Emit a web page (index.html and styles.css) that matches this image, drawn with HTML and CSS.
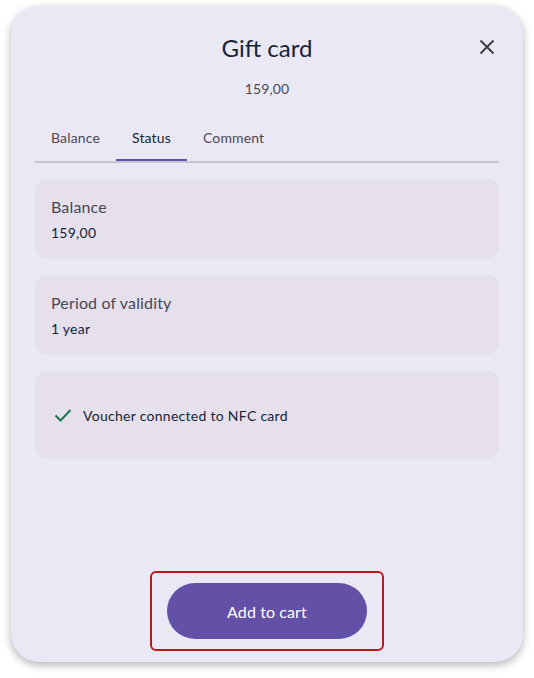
FILE: index.html
```html
<!DOCTYPE html>
<html lang="en">
<head>
    <meta charset="UTF-8">
    <meta name="viewport" content="width=device-width, initial-scale=1.0">
    <title>Gift card</title>
    <link rel="stylesheet" href="styles.css">
</head>
<body>
    <div class="dialog">
        <header class="dialog-header">
            <h1>Gift card</h1>
            <button class="close-btn" aria-label="Close">
                <svg width="24" height="24" viewBox="0 0 24 24"><path d="M5.5 5.5 L18.5 18.5 M18.5 5.5 L5.5 18.5" stroke="#3f3e48" stroke-width="2" fill="none"/></svg>
            </button>
        </header>
        <p class="price">159,00</p>

        <nav class="tabs">
            <a href="#" class="tab">Balance</a>
            <a href="#" class="tab active">Status</a>
            <a href="#" class="tab">Comment</a>
        </nav>

        <div class="info-list">
            <div class="info-card">
                <div class="info-label">Balance</div>
                <div class="info-value">159,00</div>
            </div>
            <div class="info-card">
                <div class="info-label">Period of validity</div>
                <div class="info-value">1 year</div>
            </div>
            <div class="info-card status-card">
                <svg width="24" height="24" viewBox="0 0 24 24"><path d="M4.5 12.5 L9.5 17.5 L19.5 7" stroke="#1b7a4c" stroke-width="2" fill="none"/></svg>
                <span>Voucher connected to NFC card</span>
            </div>
        </div>

        <footer class="dialog-footer">
            <div class="highlight">
                <button class="cart-btn">Add to cart</button>
            </div>
        </footer>
    </div>
</body>
</html>
```

FILE: styles.css
```css
/* Gift card dialog */
body {
    font-family: Lato, "Open Sans", sans-serif;
    background-color: #fff;
    margin: 0;
    padding: 6px 11px 16px;
}
.dialog {
    height: 656px;
    box-sizing: border-box;
    background-color: #ebe8f5;
    border-radius: 28px;
    box-shadow: 0 3px 8px rgba(0, 0, 0, 0.3);
    padding: 18px 24px 11px;
    display: flex;
    flex-direction: column;
}
.dialog-header {
    height: 46px;
    display: flex;
    align-items: center;
    justify-content: center;
    position: relative;
}
.dialog-header h1 {
    margin: 0;
    font-size: 24px;
    font-weight: 400;
    color: #14253a;
}
.close-btn {
    position: absolute;
    right: 0;
    top: 11px;
    width: 24px;
    height: 24px;
    padding: 0;
    border: none;
    background: none;
    display: flex;
}
.price {
    margin: 9px 0 0;
    line-height: 20px;
    text-align: center;
    font-size: 14px;
    letter-spacing: 0.1px;
    color: #4b4a55;
}
.tabs {
    margin-top: 15px;
    display: flex;
    border-bottom: 2px solid #c9c4cf;
}
.tab {
    padding: 0 16px;
    height: 47px;
    line-height: 48px;
    font-size: 14px;
    letter-spacing: 0.15px;
    color: #4a4856;
    text-decoration: none;
    box-sizing: border-box;
}
.tab.active {
    color: #14253a;
    border-bottom: 2px solid #6351a8;
}
.info-list {
    margin-top: 16px;
    display: flex;
    flex-direction: column;
    gap: 16px;
}
.info-card {
    background-color: #e5e0ec;
    border-radius: 12px;
    padding: 16px;
}
.info-label {
    font-size: 16px;
    line-height: 24px;
    letter-spacing: 0.15px;
    color: #4a4756;
}
.info-value {
    margin-top: 4px;
    font-size: 14px;
    line-height: 20px;
    letter-spacing: 0.25px;
    color: #14253a;
}
.status-card {
    padding: 32px 16px;
    display: flex;
    align-items: center;
    gap: 8px;
    font-size: 14px;
    letter-spacing: 0.28px;
    color: #14253a;
}
.dialog-footer {
    margin-top: auto;
    display: flex;
    justify-content: center;
}
.highlight {
    border: 2px solid #c0161c;
    border-radius: 6px;
    padding: 10px 15px;
}
.cart-btn {
    display: block;
    width: 200px;
    height: 56px;
    border: none;
    border-radius: 28px;
    background-color: #6351a8;
    color: #fff;
    font-family: Lato, "Open Sans", sans-serif;
    font-size: 16px;
    letter-spacing: 0.1px;
}
```
